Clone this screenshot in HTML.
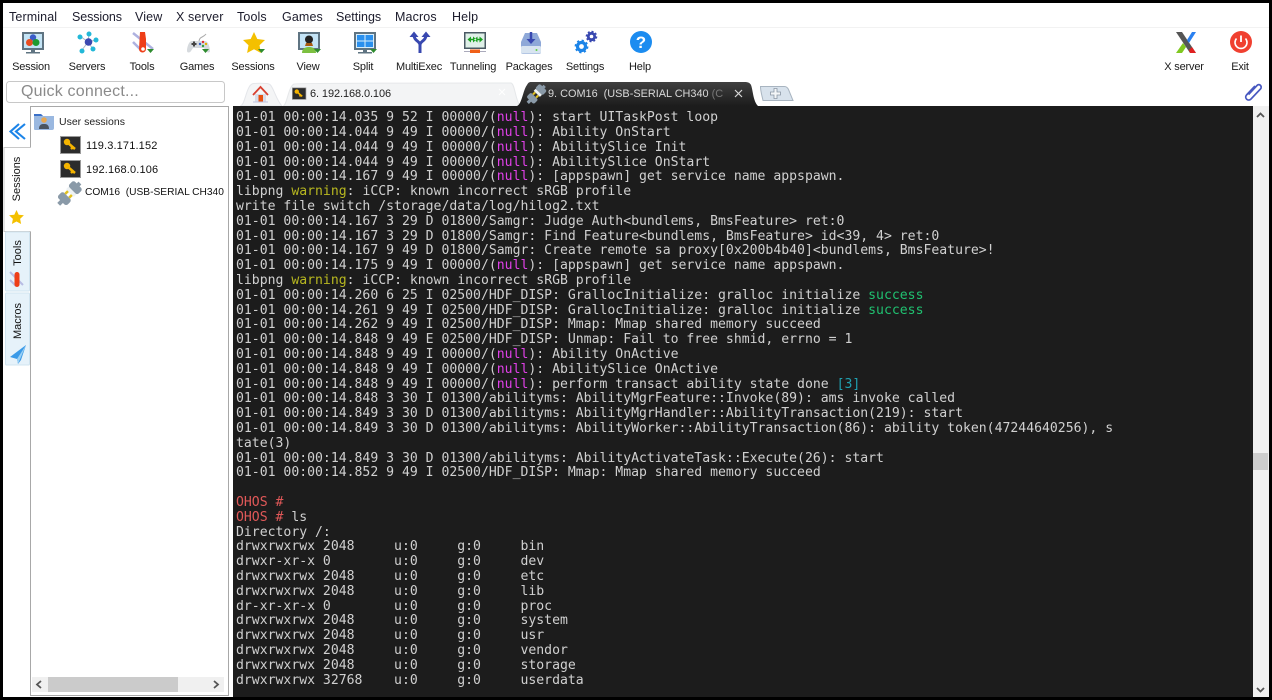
<!DOCTYPE html>
<html><head><meta charset="utf-8"><style>
*{margin:0;padding:0;box-sizing:border-box}
html,body{width:1272px;height:700px;overflow:hidden;background:#fff}
body{position:relative;font-family:"Liberation Sans",sans-serif;color:#222}
.a{position:absolute;white-space:pre}
.m{top:9px;font-size:12.5px;line-height:16px;letter-spacing:.12px;color:#1c1c2c}
.t{top:60px;font-size:11px;line-height:14px;transform:translateX(-50%);color:#1a1a1a;letter-spacing:-.18px}
#term{position:absolute;left:233px;top:106px;width:1020px;height:591px;background:#1c1c1c;overflow:hidden}
#term div{position:absolute;left:3px;white-space:pre;font:13.14px/15px "DejaVu Sans Mono","Liberation Mono",monospace;color:#d0d0d0;transform:translateY(1px)}
i{font-style:normal}.n{color:#e040e8}.w{color:#b8b820}.s{color:#20c070}.b{color:#20a0b0}.o{color:#e05858}
.v{transform:rotate(-90deg);transform-origin:center;font-size:11px;line-height:14px;color:#111;text-align:center;width:60px}
svg{position:absolute;left:0;top:0}
</style></head><body>
<div class="a m" style="left:9px">Terminal</div><div class="a m" style="left:72px;letter-spacing:-.1px">Sessions</div><div class="a m" style="left:135px">View</div><div class="a m" style="left:176px">X server</div><div class="a m" style="left:237px">Tools</div><div class="a m" style="left:282px">Games</div><div class="a m" style="left:336px;letter-spacing:0">Settings</div><div class="a m" style="left:395px">Macros</div><div class="a m" style="left:452px">Help</div>
<div class="a t" style="left:31px">Session</div><div class="a t" style="left:87px">Servers</div><div class="a t" style="left:142px">Tools</div><div class="a t" style="left:197px">Games</div><div class="a t" style="left:253px">Sessions</div><div class="a t" style="left:308px">View</div><div class="a t" style="left:363px">Split</div><div class="a t" style="left:419px">MultiExec</div><div class="a t" style="left:473px">Tunneling</div><div class="a t" style="left:529px">Packages</div><div class="a t" style="left:585px">Settings</div><div class="a t" style="left:640px">Help</div><div class="a t" style="left:1184px">X server</div><div class="a t" style="left:1240px">Exit</div>

<svg width="1272" height="700" viewBox="0 0 1272 700">
<defs>
<linearGradient id="dk" x1="0" y1="0" x2="0" y2="1"><stop offset="0" stop-color="#404040"/><stop offset="1" stop-color="#1c1c1c"/></linearGradient>
<g id="tri"><path d="M0 0h7l-3.500 4z" fill="#2e8b2e"/></g>
<g id="key"><rect x=".5" y=".5" width="20" height="17" fill="#2c2c2c" stroke="#9a9a9a"/><circle cx="7" cy="6" r="3.200" fill="#f4b400"/><path d="M8 7l7 6M13 11l-2 2" stroke="#f4b400" stroke-width="2.500"/></g>
<g id="plug"><g transform="rotate(-45 11 11)"><rect x="-1" y="4.500" width="8" height="13" rx="2.500" fill="#8a9aa8"/><rect x="-5" y="9" width="5" height="4" fill="#8a9aa8"/><rect x="14.500" y="4.500" width="8" height="13" rx="2.500" fill="#8a9aa8"/><rect x="21" y="9" width="4" height="4" fill="#8a9aa8"/><rect x="7" y="7" width="4" height="2.500" fill="#e0c020"/><rect x="7" y="12.500" width="4" height="2.500" fill="#e0c020"/><rect x="11" y="5.500" width="3.500" height="11" fill="#eef2f4"/></g></g>
</defs>
<rect x="0" y="27" width="1272" height="1" fill="#f2f2f2"/>
<!-- Session -->
<rect x="22" y="32" width="22" height="18" fill="#5f7482"/><rect x="24" y="34" width="18" height="14" fill="#c4e4f6"/><rect x="31" y="50" width="4" height="2" fill="#5f7482"/><rect x="26" y="52" width="14" height="1.500" fill="#5f7482"/><circle cx="33" cy="37.500" r="3.200" fill="#3a5cc8"/><circle cx="29.500" cy="42.500" r="3.500" fill="#e84c20"/><circle cx="36" cy="42.500" r="3.500" fill="#1e9a30"/>
<!-- Servers -->
<g stroke="#a8b4c4" stroke-width="1"><path d="M88 42L80 36M88 42L89 34M88 42L96 40M88 42L93 49M88 42L82 50"/></g><circle cx="88.500" cy="42" r="3.800" fill="#3b48b0"/><g fill="#22b8d8"><circle cx="80" cy="37" r="2.500"/><circle cx="89" cy="34" r="2.500"/><circle cx="96" cy="40" r="2.500"/><circle cx="93" cy="49" r="2.500"/><circle cx="82" cy="51" r="2.500"/></g>
<!-- Tools -->
<path d="M133 33l20 16M133 42l8 8" stroke="#aeb2e0" stroke-width="2.500"/><path d="M140 32h5l1 7v10a3.500 3.500 0 0 1-7 0z" fill="#ee3e18"/><circle cx="143" cy="49" r="1.800" fill="#fff"/><use href="#tri" x="147" y="49"/>
<!-- Games -->
<path d="M192 41h13c3 0 5 6 5 10 0 2-3 2-4 0l-2-3h-11l-2 3c-1 2-4 2-4 0 0-4 2-10 5-10z" fill="#d6dade"/><path d="M199 41c1-5 4-3 7-7" stroke="#aaa" fill="none"/><rect x="191.500" y="43" width="5" height="2" fill="#444"/><rect x="193" y="41.500" width="2" height="5" fill="#444"/><circle cx="203" cy="42" r="1.200" fill="#e03030"/><circle cx="206" cy="44" r="1.200" fill="#e0b000"/><circle cx="200" cy="44" r="1.200" fill="#3060d0"/><circle cx="203" cy="46" r="1.200" fill="#30a040"/><use href="#tri" x="202" y="49"/>
<!-- Star -->
<path d="M254 32l3.300 7 7.700 1-5.500 5.300 1.400 7.700-6.900-3.700-6.900 3.700 1.400-7.700-5.500-5.300 7.700-1z" fill="#f4c000"/><use href="#tri" x="258" y="49"/>
<!-- View -->
<rect x="298" y="32" width="22" height="18" fill="#5f7482"/><rect x="300" y="34" width="18" height="14" fill="#c4e4f6"/><circle cx="309" cy="39.500" r="4" fill="#222"/><path d="M306 43h6l1 3h-8z" fill="#a85a10"/><path d="M302 53c0-5 4-6 7-6s7 1 7 6z" fill="#7cc040"/><use href="#tri" x="314" y="49"/>
<!-- Split -->
<rect x="354" y="32" width="22" height="18" fill="#5f7482"/><rect x="356" y="34" width="18" height="14" fill="#d8eefa"/><rect x="357" y="35" width="7.500" height="5.500" fill="#2a90ee"/><rect x="365.500" y="35" width="7.500" height="5.500" fill="#2a90ee"/><rect x="357" y="41.500" width="7.500" height="5.500" fill="#2a90ee"/><rect x="365.500" y="41.500" width="7.500" height="5.500" fill="#2a90ee"/><rect x="363" y="50" width="4" height="2" fill="#5f7482"/><rect x="358" y="52" width="14" height="1.500" fill="#5f7482"/><use href="#tri" x="370" y="49"/>
<!-- MultiExec -->
<path d="M420 53V45C420 41 414 41 414 35M420 45C420 41 426 41 426 35" fill="none" stroke="#3848b0" stroke-width="3"/><path d="M409.500 37l4.500-5.500 4.500 5.500zM421.500 37l4.500-5.500 4.500 5.500z" fill="#3848b0"/>
<!-- Tunneling -->
<rect x="464" y="32" width="22" height="17" fill="#4a5a64"/><rect x="465.500" y="33.500" width="19" height="14" fill="#dff0e8"/><path d="M469 39.500h4M477 39.500h4" stroke="#1aa020" stroke-width="1.500"/><path d="M471 36.500l-3.500 3 3.500 3zM473 36.500l3.500 3-3.500 3zM477.500 36.500l-3.500 3 3.500 3zM479.500 36.500l3.500 3-3.500 3z" fill="#1aa020"/><path d="M464 51.500h22" stroke="#aab" stroke-width="1"/><rect x="470" y="49.500" width="10" height="3.500" fill="#f06018"/>
<!-- Packages -->
<path d="M525 33h12l4 9v10a2 2 0 0 1-2 2h-16a2 2 0 0 1-2-2v-10z" fill="#8ea8d8"/><rect x="521" y="46" width="20" height="7.500" rx="1.500" fill="#d8e4f0"/><path d="M531 32v9" stroke="#3848b0" stroke-width="2.500"/><path d="M526.500 39h9l-4.500 5z" fill="#3848b0"/><circle cx="536.500" cy="50" r="1" fill="#60d040"/>
<!-- Settings -->
<circle cx="581.500" cy="46.500" r="4" fill="none" stroke="#1c84e8" stroke-width="3.200"/><circle cx="581.500" cy="46.500" r="6" fill="none" stroke="#1c84e8" stroke-width="1.800" stroke-dasharray="2.200 2.500"/><circle cx="591.500" cy="36.500" r="3.200" fill="none" stroke="#3848b0" stroke-width="2.800"/><circle cx="591.500" cy="36.500" r="5" fill="none" stroke="#3848b0" stroke-width="1.600" stroke-dasharray="2 1.900"/>
<!-- Help -->
<circle cx="641" cy="42" r="11" fill="#1c8cf0"/><text x="641" y="48" font-family="Liberation Sans" font-weight="bold" font-size="17" fill="#fff" text-anchor="middle">?</text>
<!-- X server -->
<path d="M1176 32h6l14 21h-6z" fill="#555"/><path d="M1190 53h6l-4-6-3 3z" fill="#e02020"/><path d="M1176 53l7-10 3 4-4 6z" fill="#80c820"/><path d="M1187 40l5-8h4l-7 11z" fill="#2a80f0"/>
<!-- Exit -->
<circle cx="1241" cy="42" r="11" fill="#f04030"/><path d="M1236.500 38.500a6 6 0 1 0 9 0" fill="none" stroke="#fff" stroke-width="1.600"/><path d="M1241 35.500v6.500" stroke="#fff" stroke-width="1.800"/>

<!-- Quick connect -->
<rect x="6.500" y="81.500" width="218" height="21" rx="3" fill="#fff" stroke="#c8c8c8"/>
<!-- Tabs -->
<path d="M240 106c5 0 6-19 12-22 1-1 14-1 17 0 4 1 7 16 13 22z" fill="#f4f5f6" stroke="#e4e6ea" stroke-width="1"/>
<path d="M253 95l7.500-8 7.500 8" fill="none" stroke="#d84030" stroke-width="1.800"/><rect x="255" y="94" width="11" height="7.500" fill="#d8dce8"/><rect x="258.500" y="95" width="4.500" height="6.500" fill="#e85010"/><rect x="253" y="101.500" width="15" height="1" fill="#c0c4e0"/>
<path d="M283 106c4 0 5-19 11-22 1-1 214-1 217-1 4 1 4 16 9 23z" fill="#f3f4f5" stroke="#e6e8ea"/>
<g transform="translate(292 87.500) scale(.68)"><use href="#key"/></g>
<path d="M517 106c5-2 6-16 10-21 1-2 2-3 4-3h214c3 0 5 1 6 3 2 5 2 16 7 21z" fill="url(#dk)"/>
<g transform="translate(528 85) scale(.8)"><use href="#plug"/></g>
<path d="M499 89l6 6M505 89l-6 6" stroke="#fff" stroke-width="1"/>
<path d="M735 90l7 7M742 90l-7 7" stroke="#d8d8d8" stroke-width="1.200"/>
<path d="M760.500 86.500h24c2 0 3 1 4 3l4.500 11h-30c-1-5-2.500-9-2.500-14z" fill="#d8e2ec" stroke="#a8b4c0"/>
<path d="M774 88.500h3v3.500h3.500v3h-3.500v3.500h-3v-3.500h-3.500v-3h3.500z" fill="#f4f6f8" stroke="#8a96a4" stroke-width=".8"/>
<!-- Paperclip -->
<path d="M1249 96l8.500-9c2.500-2.500 5.500 1 3.500 3.500l-9.500 10c-3 3-7-1-4.500-4l8.500-9" fill="none" stroke="#4858c0" stroke-width="1.700" transform="translate(-.5 -1.500)"/>

<!-- Panel -->
<rect x="30.500" y="106.500" width="198" height="589" fill="#fff" stroke="#a8a8a8"/>
<!-- Left strip tabs -->
<path d="M25 124l-9 7.500 9 7.500M19 124l-8.500 7.500 8.500 7.500" fill="none" stroke="#1c84e8" stroke-width="2.100"/>
<path d="M31 147.500h-27v84h27" fill="#fff" stroke="#c8c8c8"/>
<rect x="29" y="148" width="3" height="83" fill="#fff"/>
<rect x="5.500" y="232" width="24" height="59" rx="1" fill="#e6f2fa" stroke="#d0e4f0"/>
<rect x="5.500" y="293" width="24" height="72" rx="1" fill="#e6f2fa" stroke="#d0e4f0"/>
<path d="M16.500 210l2.200 4.700 5.200.6-3.800 3.600 1 5.100-4.600-2.500-4.600 2.500 1-5.100-3.800-3.600 5.200-.6z" fill="#f4c000"/>
<path d="M10 272l13 13M10 280l6 6" stroke="#b8bce4" stroke-width="2"/><rect x="14.500" y="272" width="5" height="15" rx="2.500" fill="#ee3e18"/>
<path d="M26 345l-16 12 7 2 1 5 3-4z" fill="#3a9ae8"/><path d="M26 345l-9 14 1 5z" fill="#9ad0f4"/>
<!-- scrollbar H -->
<rect x="32" y="677" width="192" height="15" fill="#f0f0f0"/><rect x="48" y="677" width="130" height="15" fill="#cbcbcb"/>
<path d="M41 681l-4 3.500 4 3.500M214 681l4 3.500-4 3.500" fill="none" stroke="#555" stroke-width="1.800"/>
<!-- Tree icons -->
<path d="M34 114h7l2 2h11v12a2 2 0 0 1-2 2h-17a1 1 0 0 1-1-1z" fill="#9ab8e0"/><path d="M34 114h7l2 2h-9z" fill="#3a70c8"/><circle cx="44" cy="120" r="2.800" fill="#e8a850"/><path d="M39 129c0-4 2-5 5-5s5 1 5 5z" fill="#4a5460"/>
<use href="#key" x="60" y="136"/><use href="#key" x="60" y="160"/>
<g transform="translate(59 182)"><use href="#plug"/></g>
<!-- V scrollbar -->
<rect x="1253" y="106" width="16" height="591" fill="#f0f0f0"/><rect x="1253" y="453" width="15" height="17" fill="#cdcdcd"/>
<path d="M1257 117l3.500-3.500 3.500 3.500M1257 688l3.500 3.500 3.500-3.500" fill="none" stroke="#555" stroke-width="1.800"/>
</svg>

<div class="a" style="left:21px;top:83px;font-size:16px;line-height:18px;color:#8a8a8a;letter-spacing:.2px">Quick connect...</div>
<div class="a" style="left:310px;top:87px;font-size:11px;line-height:14px;color:#222;letter-spacing:-.1px">6. 192.168.0.106</div>
<div class="a" style="left:548px;top:87px;width:177px;overflow:hidden;font-size:10.9px;line-height:14px;color:#d8d8d8">9. COM16  (USB-SERIAL CH340 <span style="color:#777">(C</span></div>
<div class="a" style="left:59px;top:115px;font-size:10.5px;line-height:14px;color:#222">User sessions</div>
<div class="a" style="left:86px;top:139px;font-size:11px;line-height:14px;color:#111;letter-spacing:.15px">119.3.171.152</div>
<div class="a" style="left:86px;top:163px;font-size:11px;line-height:14px;color:#111;letter-spacing:.15px">192.168.0.106</div>
<div class="a" style="left:85px;top:186px;width:140px;overflow:hidden;font-size:10.2px;line-height:14px;color:#111">COM16  (USB-SERIAL CH340</div>
<div class="a v" style="left:-13px;top:172px">Sessions</div>
<div class="a v" style="left:-12px;top:246px">Tools</div>
<div class="a v" style="left:-12px;top:314px">Macros</div>

<div id="term">
<div style="top:3px">01-01 00:00:14.035 9 52 I 00000/(<i class="n">null</i>): start UITaskPost loop</div>
<div style="top:18px">01-01 00:00:14.044 9 49 I 00000/(<i class="n">null</i>): Ability OnStart</div>
<div style="top:33px">01-01 00:00:14.044 9 49 I 00000/(<i class="n">null</i>): AbilitySlice Init</div>
<div style="top:48px">01-01 00:00:14.044 9 49 I 00000/(<i class="n">null</i>): AbilitySlice OnStart</div>
<div style="top:62px">01-01 00:00:14.167 9 49 I 00000/(<i class="n">null</i>): [appspawn] get service name appspawn.</div>
<div style="top:77px">libpng <i class="w">warning</i>: iCCP: known incorrect sRGB profile</div>
<div style="top:92px">write file switch /storage/data/log/hilog2.txt</div>
<div style="top:107px">01-01 00:00:14.167 3 29 D 01800/Samgr: Judge Auth&lt;bundlems, BmsFeature&gt; ret:0</div>
<div style="top:122px">01-01 00:00:14.167 3 29 D 01800/Samgr: Find Feature&lt;bundlems, BmsFeature&gt; id&lt;39, 4&gt; ret:0</div>
<div style="top:136px">01-01 00:00:14.167 9 49 D 01800/Samgr: Create remote sa proxy[0x200b4b40]&lt;bundlems, BmsFeature&gt;!</div>
<div style="top:151px">01-01 00:00:14.175 9 49 I 00000/(<i class="n">null</i>): [appspawn] get service name appspawn.</div>
<div style="top:166px">libpng <i class="w">warning</i>: iCCP: known incorrect sRGB profile</div>
<div style="top:181px">01-01 00:00:14.260 6 25 I 02500/HDF_DISP: GrallocInitialize: gralloc initialize <i class="s">success</i></div>
<div style="top:196px">01-01 00:00:14.261 9 49 I 02500/HDF_DISP: GrallocInitialize: gralloc initialize <i class="s">success</i></div>
<div style="top:210px">01-01 00:00:14.262 9 49 I 02500/HDF_DISP: Mmap: Mmap shared memory succeed</div>
<div style="top:225px">01-01 00:00:14.848 9 49 E 02500/HDF_DISP: Unmap: Fail to free shmid, errno = 1</div>
<div style="top:240px">01-01 00:00:14.848 9 49 I 00000/(<i class="n">null</i>): Ability OnActive</div>
<div style="top:255px">01-01 00:00:14.848 9 49 I 00000/(<i class="n">null</i>): AbilitySlice OnActive</div>
<div style="top:270px">01-01 00:00:14.848 9 49 I 00000/(<i class="n">null</i>): perform transact ability state done <i class="b">[3]</i></div>
<div style="top:284px">01-01 00:00:14.848 3 30 I 01300/abilityms: AbilityMgrFeature::Invoke(89): ams invoke called</div>
<div style="top:299px">01-01 00:00:14.849 3 30 D 01300/abilityms: AbilityMgrHandler::AbilityTransaction(219): start</div>
<div style="top:314px">01-01 00:00:14.849 3 30 D 01300/abilityms: AbilityWorker::AbilityTransaction(86): ability token(47244640256), s</div>
<div style="top:329px">tate(3)</div>
<div style="top:344px">01-01 00:00:14.849 3 30 D 01300/abilityms: AbilityActivateTask::Execute(26): start</div>
<div style="top:358px">01-01 00:00:14.852 9 49 I 02500/HDF_DISP: Mmap: Mmap shared memory succeed</div>
<div style="top:388px"><i class="o">OHOS #</i></div>
<div style="top:403px"><i class="o">OHOS #</i> ls</div>
<div style="top:418px">Directory /:</div>
<div style="top:432px">drwxrwxrwx 2048     u:0     g:0     bin</div>
<div style="top:447px">drwxr-xr-x 0        u:0     g:0     dev</div>
<div style="top:462px">drwxrwxrwx 2048     u:0     g:0     etc</div>
<div style="top:477px">drwxrwxrwx 2048     u:0     g:0     lib</div>
<div style="top:492px">dr-xr-xr-x 0        u:0     g:0     proc</div>
<div style="top:506px">drwxrwxrwx 2048     u:0     g:0     system</div>
<div style="top:521px">drwxrwxrwx 2048     u:0     g:0     usr</div>
<div style="top:536px">drwxrwxrwx 2048     u:0     g:0     vendor</div>
<div style="top:551px">drwxrwxrwx 2048     u:0     g:0     storage</div>
<div style="top:566px">drwxrwxrwx 32768    u:0     g:0     userdata</div>
</div>
<div class="a" style="left:0;top:0;width:1272px;height:3px;background:#000"></div>
<div class="a" style="left:0;top:697px;width:1272px;height:3px;background:#000"></div>
<div class="a" style="left:0;top:0;width:3px;height:700px;background:#000"></div>
<div class="a" style="left:1269px;top:0;width:3px;height:700px;background:#000"></div>
</body></html>
